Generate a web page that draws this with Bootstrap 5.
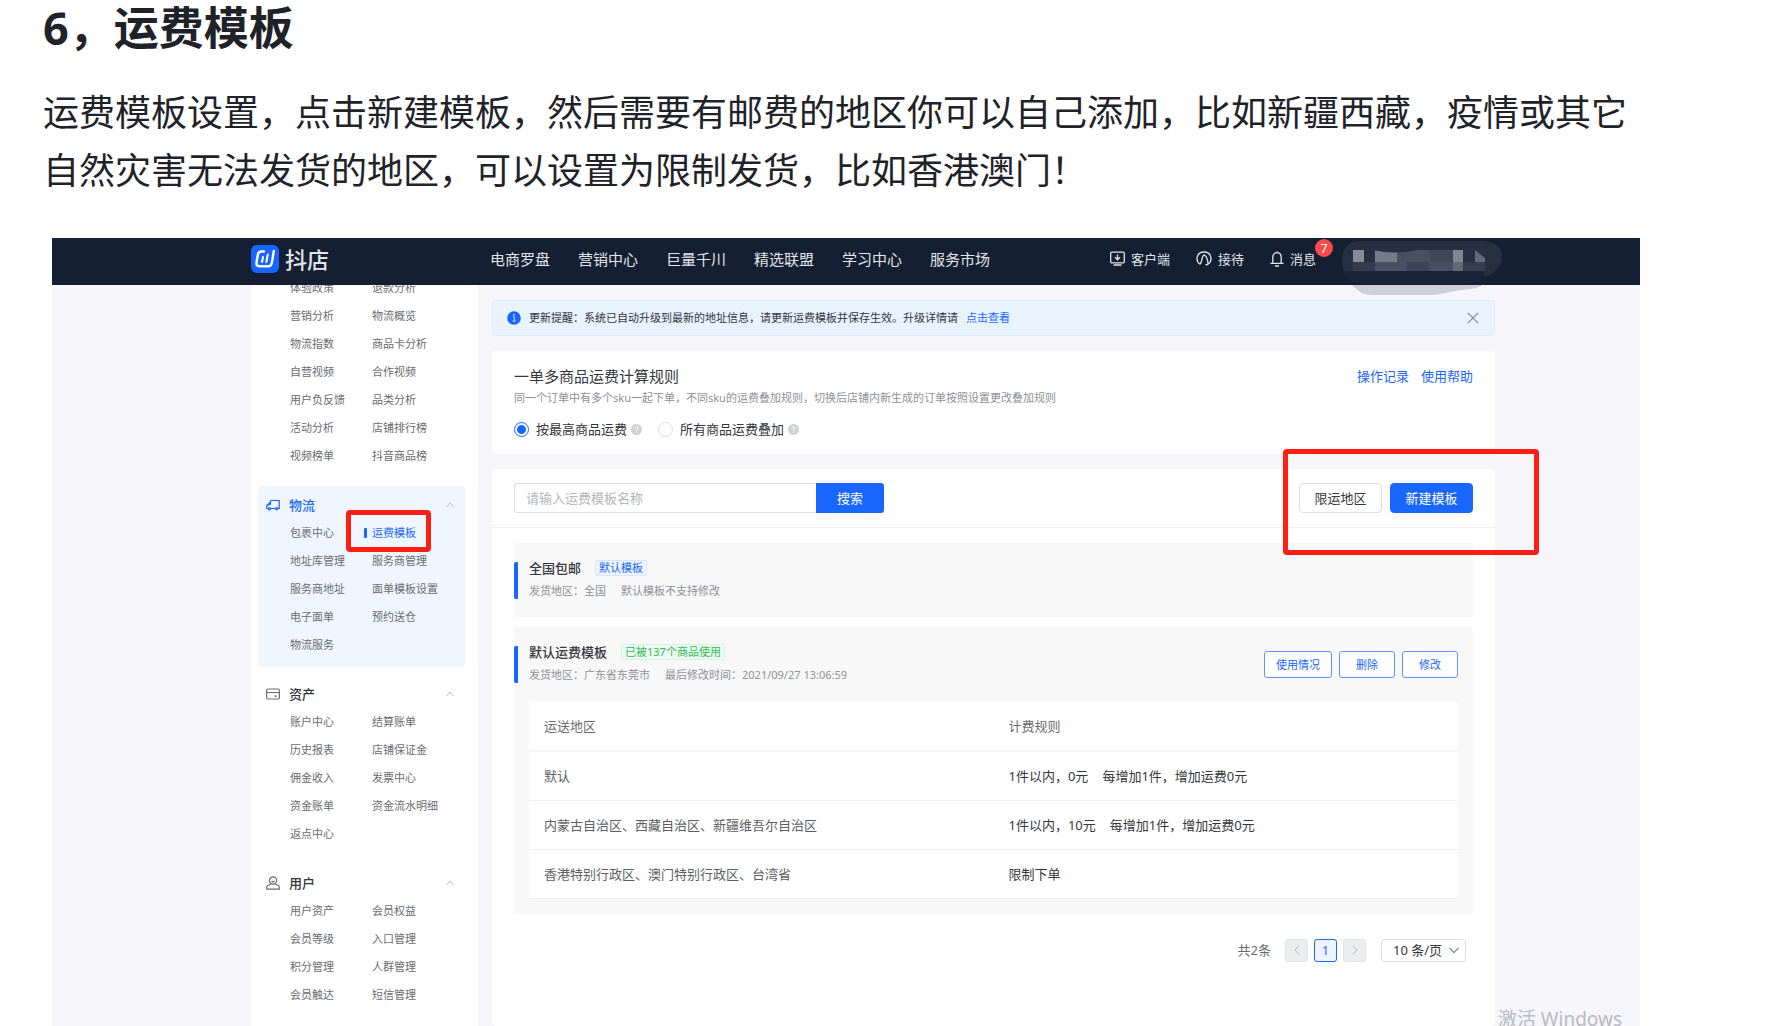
<!DOCTYPE html>
<html lang="zh-CN">
<head>
<meta charset="utf-8">
<meta name="viewport" content="width=device-width, initial-scale=1">
<title>运费模板</title>
<link href="https://cdn.jsdelivr.net/npm/bootstrap@5.3.0/dist/css/bootstrap.min.css" rel="stylesheet">
<style>
  :root { --brand: #1966ff; --ink: #33363c; --soft: #6a6c70; --mark-red: #ff1f12; }
  body { font-family: "Noto Sans", "Noto Sans CJK SC", sans-serif; font-size: 13px; line-height: 20px; color: var(--ink); background: #fff; }
  a { color: var(--brand); text-decoration: none; }
  svg { display: block; flex: none; }

  .article-text { padding: 0 130px 38px 43px; color: #1f2329; }
  .article-text h1 { font-size: 45px; line-height: 56px; font-weight: 700; margin: 0 0 28px; }
  .article-text p { font-size: 36px; line-height: 58px; margin: 0; }

  .shot { margin: 0 133px 0 52px; background: #f5f5fa; min-height: 0; }
  .topbar { height: 47px; padding: 0 324px 6px 199px; background: #151f33; z-index: 2; }
  .topbar a { color: #e3e5e9; }
  .brand-name { font-size: 22px; line-height: 28px; font-weight: 500; margin-left: 6px; }
  .main-nav { margin-left: 161px; gap: 28px; font-size: 15px; }
  .tools { gap: 26px; }
  .tools a { gap: 6px; }
  .msg-count { top: -10px; right: -17px; width: 18px; height: 18px; border-radius: 9px; background: #fb4a4a; color: #fff; font-size: 13px; line-height: 18px; text-align: center; }
  .account { top: 0; right: 138px; }

  .content-row { padding: 0 145px 0 199px; gap: 14px; min-height: 0; }
  .side { width: 227px; flex: none; padding: 0 13px 0 7px; background: #fff; }
  .side-group { padding: 5px 0 8px; margin-bottom: 8px; border-radius: 4px; }
  .side-group.current { background: #f0f6ff; }
  .side-head { height: 28px; padding: 0 11px 0 8px; }
  .side-head h2 { font-size: 13px; line-height: 20px; font-weight: 500; margin: 0 0 0 9px; }
  .current h2 { color: var(--brand); }
  .side-list { display: grid; grid-template-columns: 82px 1fr; padding-left: 32px; margin: 0; list-style: none; font-size: 11px; line-height: 28px; white-space: nowrap; }
  .side .side-first { margin: -11px 0 16px; }
  .side-list a { color: var(--soft); }
  .side-list a.chosen { color: var(--brand); }
  .chosen::before { content: ""; position: absolute; left: -8px; top: 9px; width: 3px; height: 10px; border-radius: 1px; background: var(--brand); }
  .ring { position: absolute; border: 5px solid var(--mark-red); border-radius: 4px; pointer-events: none; z-index: 3; }
  .ring-menu { inset: -9px -15px -5px -26px; }
  .ring-actions { inset: -34px -66px -42px -16px; }

  .main-col { padding-top: 15px; gap: 15px; min-width: 0; }
  .notice { height: 36px; padding: 0 15px 0 14px; border: 1px solid #deeafb; border-radius: 4px; background: #e9f2ff; font-size: 11px; }
  .plain-btn { border: 0; padding: 0; background: none; }
  .panel { background: #fff; border-radius: 4px; }
  .rules { padding: 14px 22px 15px; }
  .rules h2 { font-size: 15px; line-height: 22px; font-weight: 400; margin: 0; }
  .rules-links { line-height: 22px; }
  .rules p { font-size: 11px; line-height: 22px; color: #8e9196; margin: 0 0 10px; }
  .choice input { appearance: none; width: 15px; height: 15px; margin: 0 7px 0 0; border: 1px solid #d9dbdf; border-radius: 50%; background: #fff; }
  .choice input:checked { border-color: var(--brand); background: radial-gradient(circle, var(--brand) 0 4px, #fff 5px); }
  .choice svg { margin-left: 4px; }
  .second-choice { margin-left: 16px; }

  .toolbar { padding: 14px 22px; border-bottom: 1px solid #eff0f2; }
  .search { width: 370px; height: 30px; }
  .search input { min-width: 0; border: 1px solid #dcdee2; border-right: 0; border-radius: 3px 0 0 3px; padding: 0 11px; color: var(--ink); }
  .search input::placeholder { color: #b4b6ba; opacity: 1; }
  .search button { width: 68px; border: 0; border-radius: 0 3px 3px 0; background: var(--brand); color: #fff; }
  .tool-btn { width: 83px; height: 30px; padding: 0; border: 1px solid #dcdee2; border-radius: 4px; background: #fff; color: var(--ink); }
  .tool-btn.filled { border-color: var(--brand); background: var(--brand); color: #fff; }

  .templates { padding: 15px 22px 0; }
  .tpl { background: #f8f8f9; padding: 19px 15px 18px 0; margin-bottom: 10px; }
  .tpl.open { padding-bottom: 15px; margin-bottom: 25px; }
  .tpl-head { border-left: 4px solid var(--brand); border-radius: 2px; padding-left: 11px; height: 37px; }
  .tpl-head h3 { font-size: 13px; line-height: 12px; height: 12px; font-weight: 500; margin: 0; }
  .tpl-head p { font-size: 11px; line-height: 14px; margin: 10px 0 0; color: #8e9196; gap: 15px; }
  .tag { margin-left: 14px; padding: 0 3px; border: 1px solid #d8e6ff; border-radius: 2px; background: #edf4ff; color: var(--brand); font-size: 11px; line-height: 14px; }
  .tag.used { border-color: #d9f1e0; background: #eef9f1; color: #2fbf55; }
  .row-actions { gap: 7px; }
  .row-btn { height: 27px; min-width: 56px; padding: 0 11px; border: 1px solid #5d93ff; border-radius: 3px; background: #fff; color: var(--brand); font-size: 11px; }
  .fees { width: calc(100% - 15px); margin: 18px 0 0 15px; table-layout: fixed; border-radius: 4px; background: #fff; }
  .fees th, .fees td { height: 49px; padding: 0 15px; border-bottom: 1px solid #efeff1; }
  .fees th { height: 50px; font-weight: 400; color: var(--soft); border-bottom-width: 2px; border-color: #f5f5f6; }
  .fees td:first-child { color: #5b5e63; }
  .fees span { margin-left: 14px; }

  .pager { margin-right: 7px; gap: 6px; height: 23px; color: var(--soft); }
  .pager button { width: 23px; height: 23px; padding: 0; border: 1px solid #e2e3e6; border-radius: 3px; background: #ebecee; }
  .pager button.on { border-color: var(--brand); background: #edf4ff; color: var(--brand); line-height: 20px; }
  .pager button svg { margin: auto; }
  .pager select { appearance: none; width: 85px; height: 23px; padding: 0 0 0 11px; border: 1px solid #dcdee2; border-radius: 3px; background: #fff; color: var(--ink); line-height: 20px; }
  .size-pick { margin-left: 9px; }
  .size-pick svg { position: absolute; right: 7px; top: 8px; pointer-events: none; }
  .activate { right: 18px; bottom: -7px; font-size: 19px; line-height: 28px; color: #b9bac0; white-space: nowrap; }
</style>
<script src="https://cdn.jsdelivr.net/npm/bootstrap@5.3.0/dist/js/bootstrap.bundle.min.js"></script>
</head>
<body>
<div class="vh-100 overflow-hidden d-flex flex-column">
  <section class="article-text">
    <h1>6，运费模板</h1>
    <p>运费模板设置，点击新建模板，然后需要有邮费的地区你可以自己添加，比如新疆西藏，疫情或其它自然灾害无法发货的地区，可以设置为限制发货，比如香港澳门！</p>
  </section>

  <div class="shot flex-grow-1 d-flex flex-column position-relative overflow-hidden">
    <header class="topbar d-flex align-items-center flex-shrink-0 position-relative">
      <a href="#" class="d-flex align-items-center">
        <svg width="28" height="28" viewBox="0 0 28 28"><rect width="28" height="28" rx="6" fill="#1966ff"/><path d="M13 6.500h-2.500q-3 0-3.600 3L5.500 17.500q-.6 3.800 3 3.800h8.500q3.200 0 3.800-3.200L22.800 6" fill="none" stroke="#fff" stroke-width="2.400" stroke-linecap="round"/><path d="M12 12l-1 5M16.800 9.500L15.300 17" stroke="#fff" stroke-width="2" stroke-linecap="round"/></svg>
        <span class="brand-name">抖店</span>
      </a>
      <nav class="main-nav d-flex">
        <a href="#">电商罗盘</a><a href="#">营销中心</a><a href="#">巨量千川</a><a href="#">精选联盟</a><a href="#">学习中心</a><a href="#">服务市场</a>
      </nav>
      <div class="tools d-flex ms-auto">
        <a href="#" class="d-flex align-items-center">
          <svg width="15" height="15" viewBox="0 0 15 15" fill="none" stroke="#e3e5e9" stroke-width="1.300"><rect x=".7" y="1.200" width="13.600" height="10.600" rx="1.200"/><path d="M7.500 3.500v5M5 6.300l2.500 2.500L10 6.300M3.500 14h8"/></svg>客户端</a>
        <a href="#" class="d-flex align-items-center">
          <svg width="16" height="15" viewBox="0 0 16 15" fill="none" stroke="#e3e5e9" stroke-width="1.300"><path d="M4 13.200C-.8 10 .2 1 8 1s8.800 9 4 12.200c-.6.5-1.800.6-2.500.2M4 13.200C6.500 11 5.200 5 8.200 3.800M8.200 3.800c2.800 2 3.800 5.400 3.800 9.400"/></svg>接待</a>
        <a href="#" class="d-flex align-items-center position-relative">
          <svg width="14" height="16" viewBox="0 0 14 16" fill="none" stroke="#e3e5e9" stroke-width="1.300"><path d="M7 .5v1.500M2.800 12V6.500C2.800 0 11.200 0 11.200 6.500V12M.5 12.300h13M5 15h4"/></svg>消息
          <span class="msg-count position-absolute">7</span></a>
      </div>
    </header>
    <svg class="account position-absolute z-3" width="162" height="58" viewBox="0 0 162 58">
      <path d="M12 47h130c-3 4-16 4-27 6-12 2-16 4-26 4H32c-8 0-13-3-20-10z" fill="#cfd0d5"/>
      <path d="M16 3h128c24 2 24 24 4 35H6C-2 22 2 6 16 3z" fill="#263041"/>
      <path d="M5 33h140l-2 9c-8 4-20 3-30 3H14c-5-2-8-6-9-12z" fill="#19243a"/>
      <path d="M13 12h11v12H13z" fill="#858c98"/><path d="M35 12h22v12H35z" fill="#747c89"/><path d="M57 12h33v12H57z" fill="#465060"/>
      <path d="M90 12h23v12H90z" fill="#3e4858"/><path d="M113 12h10v12h-10z" fill="#808792"/><path d="M135 12l10 8v4h-10z" fill="#606a78"/>
      <path d="M13 24h22v9H13z" fill="#323c4c"/><path d="M35 24h32v9H35z" fill="#475161"/><path d="M67 24h22v9H67z" fill="#3a4454"/><path d="M89 24h24v9H89z" fill="#465060"/><path d="M113 24h10v9h-10z" fill="#606a78"/><path d="M123 24h22v9h-22z" fill="#343e4f"/>
      <path d="M33 12q22 5 44 0z" fill="#263041"/>
    </svg>

    <div class="content-row d-flex flex-grow-1">
      <aside class="side">
        <ul class="side-list side-first">
          <li><a href="#">体验政策</a></li><li><a href="#">退款分析</a></li>
          <li><a href="#">营销分析</a></li><li><a href="#">物流概览</a></li>
          <li><a href="#">物流指数</a></li><li><a href="#">商品卡分析</a></li>
          <li><a href="#">自营视频</a></li><li><a href="#">合作视频</a></li>
          <li><a href="#">用户负反馈</a></li><li><a href="#">品类分析</a></li>
          <li><a href="#">活动分析</a></li><li><a href="#">店铺排行榜</a></li>
          <li><a href="#">视频榜单</a></li><li><a href="#">抖音商品榜</a></li>
        </ul>
        <section class="side-group current">
          <div class="side-head d-flex align-items-center">
            <svg width="14" height="14" viewBox="0 0 14 14" fill="none" stroke="#1966ff" stroke-width="1.200"><path d="M4.500 10.500h5M2.200 10.500H.8V7.500L3.500 5 4.800 2.500h8.400v8h-1.500M4.500 2.800V6L1 7.500"/><circle cx="3.400" cy="10.800" r="1.100"/><circle cx="10.600" cy="10.800" r="1.100"/></svg>
            <h2>物流</h2>
            <svg class="ms-auto" width="8" height="6" viewBox="0 0 8 6" fill="none" stroke="#b6b9bf"><path d="M.5 5L4 1l3.500 4"/></svg>
          </div>
          <ul class="side-list">
            <li><a href="#">包裹中心</a></li><li><a href="#" class="chosen d-inline-block position-relative">运费模板<i class="ring ring-menu"></i></a></li>
            <li><a href="#">地址库管理</a></li><li><a href="#">服务商管理</a></li>
            <li><a href="#">服务商地址</a></li><li><a href="#">面单模板设置</a></li>
            <li><a href="#">电子面单</a></li><li><a href="#">预约送仓</a></li>
            <li><a href="#">物流服务</a></li>
          </ul>
        </section>
        <section class="side-group">
          <div class="side-head d-flex align-items-center">
            <svg width="14" height="14" viewBox="0 0 14 14" fill="none" stroke="#6a6c70" stroke-width="1.200"><rect x=".6" y="2" width="12.800" height="10" rx="1.500"/><path d="M.6 5.500h12.800M8.500 9.200h2.500"/></svg>
            <h2>资产</h2>
            <svg class="ms-auto" width="8" height="6" viewBox="0 0 8 6" fill="none" stroke="#b6b9bf"><path d="M.5 5L4 1l3.500 4"/></svg>
          </div>
          <ul class="side-list">
            <li><a href="#">账户中心</a></li><li><a href="#">结算账单</a></li>
            <li><a href="#">历史报表</a></li><li><a href="#">店铺保证金</a></li>
            <li><a href="#">佣金收入</a></li><li><a href="#">发票中心</a></li>
            <li><a href="#">资金账单</a></li><li><a href="#">资金流水明细</a></li>
            <li><a href="#">返点中心</a></li>
          </ul>
        </section>
        <section class="side-group">
          <div class="side-head d-flex align-items-center">
            <svg width="14" height="14" viewBox="0 0 14 14" fill="none" stroke="#6a6c70" stroke-width="1.200"><circle cx="7" cy="4.500" r="3.600"/><path d="M5.300 7.800L1.500 9.500q-.8.500-.8 2.200v1.500h12.600v-1.500q0-1.700-.8-2.200L8.700 7.800M5.500 5q1.500 1.500 3 0"/></svg>
            <h2>用户</h2>
            <svg class="ms-auto" width="8" height="6" viewBox="0 0 8 6" fill="none" stroke="#b6b9bf"><path d="M.5 5L4 1l3.500 4"/></svg>
          </div>
          <ul class="side-list">
            <li><a href="#">用户资产</a></li><li><a href="#">会员权益</a></li>
            <li><a href="#">会员等级</a></li><li><a href="#">入口管理</a></li>
            <li><a href="#">积分管理</a></li><li><a href="#">人群管理</a></li>
            <li><a href="#">会员触达</a></li><li><a href="#">短信管理</a></li>
          </ul>
        </section>
      </aside>

      <main class="main-col flex-grow-1 d-flex flex-column">
        <div class="notice d-flex align-items-center flex-shrink-0">
          <svg width="14" height="14" viewBox="0 0 14 14"><circle cx="7" cy="7" r="6.800" fill="#1966ff"/><path d="M6 5.800h1.300V10M5.500 10.200h3.200" fill="none" stroke="#cfe0ff"/><circle cx="7" cy="3.800" r=".8" fill="#fff"/></svg>
          <span class="ms-2">更新提醒：系统已自动升级到最新的地址信息，请更新运费模板并保存生效。升级详情请</span>
          <a href="#" class="ms-2">点击查看</a>
          <button type="button" class="plain-btn ms-auto" aria-label="关闭"><svg width="12" height="12" viewBox="0 0 12 12" stroke="#85898f" stroke-width="1.200"><path d="M.8.8l10.400 10.400M11.200.8L.8 11.200"/></svg></button>
        </div>

        <section class="panel rules flex-shrink-0">
          <div class="d-flex justify-content-between">
            <h2>一单多商品运费计算规则</h2>
            <div class="rules-links d-flex gap-2"><a href="#">操作记录</a><a href="#" class="ms-1">使用帮助</a></div>
          </div>
          <p>同一个订单中有多个sku一起下单，不同sku的运费叠加规则，切换后店铺内新生成的订单按照设置更改叠加规则</p>
          <div class="d-flex">
            <label class="choice d-flex align-items-center"><input type="radio" name="rule" checked>按最高商品运费
              <svg width="11" height="11" viewBox="0 0 11 11"><circle cx="5.500" cy="5.500" r="5.500" fill="#cfd1d4"/><path d="M3.800 4.300q.2-1.500 1.700-1.500t1.700 1.300q0 .9-1.700 1.700v.8" fill="none" stroke="#fff"/><circle cx="5.500" cy="8.200" r=".6" fill="#fff"/></svg></label>
            <label class="choice second-choice d-flex align-items-center"><input type="radio" name="rule">所有商品运费叠加
              <svg width="11" height="11" viewBox="0 0 11 11"><circle cx="5.500" cy="5.500" r="5.500" fill="#cfd1d4"/><path d="M3.800 4.300q.2-1.500 1.700-1.500t1.700 1.300q0 .9-1.700 1.700v.8" fill="none" stroke="#fff"/><circle cx="5.500" cy="8.200" r=".6" fill="#fff"/></svg></label>
          </div>
        </section>

        <section class="panel flex-grow-1">
          <div class="toolbar d-flex justify-content-between">
            <form class="search d-flex">
              <input class="flex-grow-1" type="text" placeholder="请输入运费模板名称" aria-label="运费模板名称">
              <button type="button">搜索</button>
            </form>
            <div class="d-flex position-relative">
              <button type="button" class="tool-btn me-2">限运地区</button>
              <button type="button" class="tool-btn filled">新建模板</button>
              <i class="ring ring-actions"></i>
            </div>
          </div>
          <div class="templates">
            <article class="tpl">
              <div class="tpl-head">
                <h3 class="d-flex align-items-center">全国包邮<span class="tag fw-normal">默认模板</span></h3>
                <p class="d-flex"><span>发货地区：全国</span><span>默认模板不支持修改</span></p>
              </div>
            </article>
            <article class="tpl open">
              <div class="d-flex justify-content-between align-items-center">
                <div class="tpl-head">
                  <h3 class="d-flex align-items-center">默认运费模板<span class="tag used fw-normal">已被137个商品使用</span></h3>
                  <p class="d-flex"><span>发货地区：广东省东莞市</span><span>最后修改时间：2021/09/27 13:06:59</span></p>
                </div>
                <div class="row-actions d-flex">
                  <button type="button" class="row-btn">使用情况</button>
                  <button type="button" class="row-btn">删除</button>
                  <button type="button" class="row-btn">修改</button>
                </div>
              </div>
              <table class="fees">
                <thead><tr><th>运送地区</th><th>计费规则</th></tr></thead>
                <tbody>
                  <tr><td>默认</td><td>1件以内，0元<span>每增加1件，增加运费0元</span></td></tr>
                  <tr><td>内蒙古自治区、西藏自治区、新疆维吾尔自治区</td><td>1件以内，10元<span>每增加1件，增加运费0元</span></td></tr>
                  <tr><td>香港特别行政区、澳门特别行政区、台湾省</td><td>限制下单</td></tr>
                </tbody>
              </table>
            </article>
            <div class="pager d-flex justify-content-end align-items-center">
              <span class="me-2">共2条</span>
              <button type="button" aria-label="上一页"><svg width="6" height="10" viewBox="0 0 6 10" fill="none" stroke="#b0b3b8"><path d="M5 .8L1 5l4 4.200"/></svg></button>
              <button type="button" class="on">1</button>
              <button type="button" aria-label="下一页"><svg width="6" height="10" viewBox="0 0 6 10" fill="none" stroke="#b0b3b8"><path d="M1 .8L5 5 1 9.200"/></svg></button>
              <div class="size-pick position-relative">
                <select aria-label="每页条数"><option>10 条/页</option><option>20 条/页</option></select>
                <svg width="10" height="7" viewBox="0 0 10 7" fill="none" stroke="#85898f" stroke-width="1.200"><path d="M.6 1L5 5.600 9.400 1"/></svg>
              </div>
            </div>
          </div>
        </section>
      </main>
    </div>
    <div class="activate position-absolute">激活 Windows</div>
  </div>
</div>
</body>
</html>
